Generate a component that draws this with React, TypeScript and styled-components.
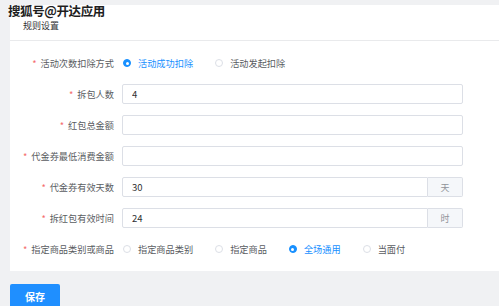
import styled, { createGlobalStyle } from "styled-components";

const GlobalStyle = createGlobalStyle`
    html, body {
        margin: 0;
        padding: 0;
        background: #f0f1f3;
        font-family: "Noto Sans CJK SC", "Noto Sans", sans-serif;
    }
`;

type Option = { label: string; checked?: boolean };

const deductOptions: Option[] = [
    { label: "活动成功扣除", checked: true },
    { label: "活动发起扣除" },
];

const goodsOptions: Option[] = [
    { label: "指定商品类别" },
    { label: "指定商品" },
    { label: "全场通用", checked: true },
    { label: "当面付" },
];

function RadioGroup({ options }: { options: Option[] }) {
    return (
        <Radios>
            {options.map((o) => (
                <RadioItem key={o.label} $checked={!!o.checked}>
                    <RadioDot $checked={!!o.checked} />
                    {o.label}
                </RadioItem>
            ))}
        </Radios>
    );
}

export default function App() {
    return (
        <>
            <GlobalStyle />
            <Page>
                <Watermark>搜狐号@开达应用</Watermark>
                <Card>
                    <CardHeader>规则设置</CardHeader>
                    <Form>
                        <Row>
                            <Label>活动次数扣除方式</Label>
                            <RadioGroup options={deductOptions} />
                        </Row>
                        <Row>
                            <Label>拆包人数</Label>
                            <Input defaultValue="4" />
                        </Row>
                        <Row>
                            <Label>红包总金额</Label>
                            <Input />
                        </Row>
                        <Row>
                            <Label>代金券最低消费金额</Label>
                            <Input />
                        </Row>
                        <Row>
                            <Label>代金券有效天数</Label>
                            <InputGroup>
                                <GroupInput defaultValue="30" />
                                <Addon>天</Addon>
                            </InputGroup>
                        </Row>
                        <Row>
                            <Label>拆红包有效时间</Label>
                            <InputGroup>
                                <GroupInput defaultValue="24" />
                                <Addon>时</Addon>
                            </InputGroup>
                        </Row>
                        <Row>
                            <Label>指定商品类别或商品</Label>
                            <RadioGroup options={goodsOptions} />
                        </Row>
                    </Form>
                </Card>
                <SaveButton>保存</SaveButton>
            </Page>
        </>
    );
}

const Page = styled.div`
    position: relative;
    padding: 5px 0 0 10px;
    height: 301px;
    overflow: hidden;
`;

const Watermark = styled.div`
    position: absolute;
    left: 8px;
    top: 4px;
    font-size: 12.5px;
    line-height: 14px;
    font-weight: 600;
    color: #1e1e1e;
    letter-spacing: -0.4px;
    text-shadow: 0 0 2px #fff, 0 0 2px #fff;
    z-index: 2;
`;

const Card = styled.div`
    background: #fff;
`;

const CardHeader = styled.div`
    height: 36px;
    box-sizing: border-box;
    padding: 15px 0 0 13px;
    font-size: 9px;
    line-height: 11px;
    color: #303133;
    border-bottom: 1px solid #e9eaec;
`;

const Form = styled.div`
    display: flex;
    flex-direction: column;
    gap: 11px;
    padding: 12px 0 12px;
`;

const Row = styled.div`
    display: flex;
    align-items: center;
    height: 20px;
`;

const Label = styled.div`
    width: 104px;
    margin-right: 8px;
    text-align: right;
    font-size: 9.2px;
    color: #595c61;
    white-space: nowrap;
    &::before {
        content: "*";
        color: #f56c6c;
        margin-right: 4px;
    }
`;

const Input = styled.input`
    width: 341px;
    height: 20px;
    box-sizing: border-box;
    border: 1px solid #dcdfe6;
    border-radius: 2px;
    padding: 0 9px;
    font-family: inherit;
    font-size: 9.5px;
    color: #303133;
    outline: none;
`;

const InputGroup = styled.div`
    display: flex;
    width: 341px;
    height: 20px;
`;

const GroupInput = styled(Input)`
    flex: 1;
    width: auto;
    min-width: 0;
    border-radius: 2px 0 0 2px;
`;

const Addon = styled.div`
    width: 35px;
    box-sizing: border-box;
    display: flex;
    align-items: center;
    justify-content: center;
    background: #f5f7fa;
    border: 1px solid #dcdfe6;
    border-left: 0;
    border-radius: 0 2px 2px 0;
    font-size: 9px;
    color: #909399;
`;

const Radios = styled.div`
    display: flex;
    align-items: center;
    gap: 22px;
    padding-left: 1px;
`;

const RadioItem = styled.label<{ $checked: boolean }>`
    display: flex;
    align-items: center;
    gap: 7px;
    font-size: 9.2px;
    color: ${(p) => (p.$checked ? "#1890ff" : "#595c61")};
    white-space: nowrap;
`;

const RadioDot = styled.span<{ $checked: boolean }>`
    width: 8px;
    height: 8px;
    box-sizing: border-box;
    border-radius: 50%;
    border: 1px solid ${(p) => (p.$checked ? "#1890ff" : "#dcdfe6")};
    background: ${(p) => (p.$checked ? "#1890ff" : "#fff")};
    display: flex;
    align-items: center;
    justify-content: center;
    &::after {
        content: "";
        width: 3px;
        height: 3px;
        border-radius: 50%;
        background: #fff;
        display: ${(p) => (p.$checked ? "block" : "none")};
    }
`;

const SaveButton = styled.button`
    margin-top: 13px;
    width: 50px;
    height: 24px;
    border: 0;
    border-radius: 2px;
    background: #1f8fff;
    color: #fff;
    font-family: inherit;
    font-size: 10px;
    font-weight: 700;
    padding: 0;
`;
